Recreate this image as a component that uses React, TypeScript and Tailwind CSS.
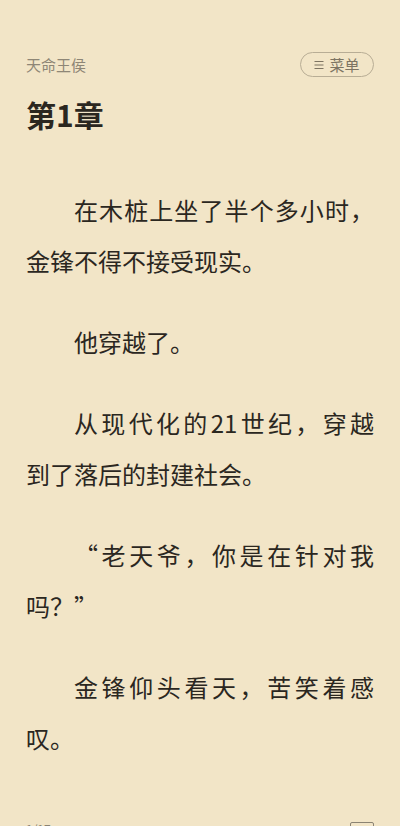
import React from 'react'

// Each paragraph is given as its visual lines so wrapping matches the page
const paragraphs: string[][] = [
  ['在木桩上坐了半个多小时，', '金锋不得不接受现实。'],
  ['他穿越了。'],
  ['从现代化的21世纪，穿越', '到了落后的封建社会。'],
  ['“老天爷，你是在针对我', '吗？”'],
  ['金锋仰头看天，苦笑着感', '叹。'],
]

const MenuIcon: React.FC = () => (
  <svg width="10" height="10" viewBox="0 0 10 10" fill="none" stroke="#7d7462" strokeWidth="1.1">
    <path d="M0.5 1.5h9M0.5 5h9M0.5 8.5h9" />
  </svg>
)

const App: React.FC = () => {
  return (
    <div
      className="h-[826px] w-[400px] overflow-hidden bg-[#f2e5c7] px-[26px] text-[#2b271f]"
      style={{ fontFamily: '"Noto Sans CJK SC", "Noto Sans", sans-serif' }}
      lang="zh-CN"
    >
      {/* Header */}
      <div className="flex items-center justify-between pt-[52px]">
        <span className="text-[15px] leading-[25px] text-[#8e8676]">天命王侯</span>
        <button className="flex h-[25px] w-[74px] items-center justify-center gap-[5px] rounded-full border border-[#b8ad95] text-[15px] text-[#7d7462]">
          <MenuIcon />
          <span className="leading-none">菜单</span>
        </button>
      </div>

      {/* Chapter title */}
      <h1 className="mt-[17px] text-[30px] font-bold leading-[40px] text-[#2b271f]">第1章</h1>

      {/* Body */}
      <div className="mt-[50px] flex flex-col gap-[30px] text-[24px] leading-[51px]">
        {paragraphs.map((lines, pi) => (
          <p key={pi}>
            {lines.map((line, li) => {
              const last = li === lines.length - 1
              return (
                <span
                  key={li}
                  className={`block whitespace-nowrap ${li === 0 ? 'pl-[48px]' : ''} ${
                    last ? 'text-left' : 'text-justify [text-align-last:justify]'
                  }`}
                >
                  {line}
                </span>
              )
            })}
          </p>
        ))}
      </div>

      {/* Footer (mostly cut off at the bottom edge) */}
      <div className="mt-[59px] flex items-start justify-between text-[12px] leading-[14px] text-[#8b8373]">
        <span>1/17</span>
        <div className="h-[12px] w-[24px] rounded-[2px] border border-[#8b8373]" />
      </div>
    </div>
  )
}

export default App
